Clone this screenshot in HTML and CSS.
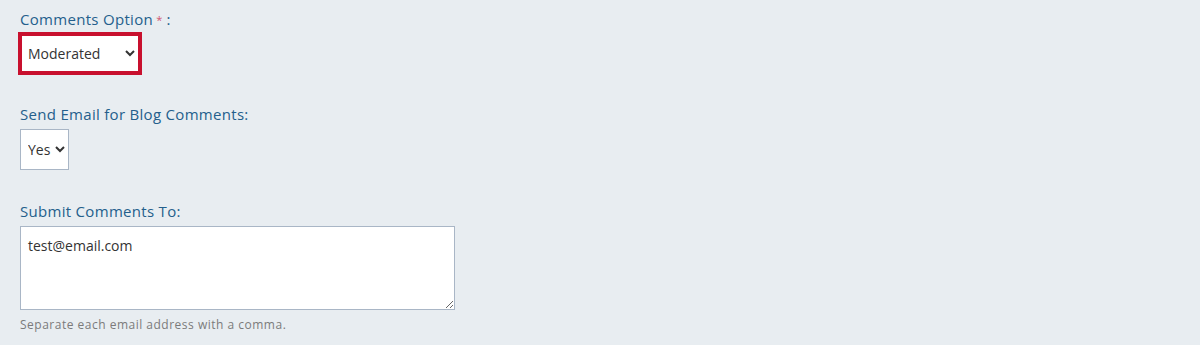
FILE: index.html
```html
<!DOCTYPE html>
<html lang="en">
<head>
<meta charset="utf-8">
<title>Blog Comments Settings</title>
<link rel="stylesheet" href="styles.css">
</head>
<body>
<form class="settings">
  <div class="field">
    <label class="label" for="opt">Comments Option <span class="req">*</span> :</label>
    <select id="opt" class="select select-focus">
      <option>Moderated</option>
      <option>Unmoderated</option>
      <option>Disabled</option>
    </select>
  </div>
  <div class="field">
    <label class="label" for="send">Send Email for Blog Comments:</label>
    <select id="send" class="select">
      <option>Yes</option>
      <option>No</option>
    </select>
  </div>
  <div class="field field-last">
    <label class="label" for="to">Submit Comments To:</label>
    <textarea id="to" class="textarea">test@email.com</textarea>
    <div class="help">Separate each email address with a comma.</div>
  </div>
</form>
</body>
</html>
```

FILE: styles.css
```css
html, body {
  margin: 0;
  padding: 0;
  background: #e8edf1;
}
body {
  font-family: "Open Sans", "Noto Sans", sans-serif;
  color: #333;
}
.settings {
  display: flex;
  flex-direction: column;
  align-items: flex-start;
  padding: 9px 20px 0 20px;
  gap: 30px;
}
.field {
  display: flex;
  flex-direction: column;
  align-items: flex-start;
}
.field-last {
  margin-top: 1px;
}
.label {
  font-size: 15px;
  line-height: 20px;
  letter-spacing: 0.3px;
  color: #245f8c;
  margin-bottom: 5px;
}
.req {
  color: #d0566f;
  font-size: 11px;
  line-height: 0;
  letter-spacing: 0;
  position: relative;
  top: -1px;
  margin-left: -1px;
}
.select {
  box-sizing: border-box;
  height: 41px;
  font-family: inherit;
  font-size: 14px;
  color: #333;
  background: #fff;
  border: 1px solid #a9b6c6;
  border-radius: 0;
  padding: 0 1px 0 3px;
  outline: none;
}
.select-focus {
  width: 124px;
  height: 43px;
  border: 4px solid #c8102e;
  padding-left: 2px;
  margin: -2px 0 -1px -2px;
}
.textarea {
  box-sizing: border-box;
  width: 435px;
  height: 84px;
  border: 1px solid #a9b6c6;
  border-radius: 0;
  background: #fff;
  padding: 9px 7px;
  font-family: inherit;
  font-size: 14px;
  line-height: 20px;
  color: #333;
  margin: 0;
}
.help {
  margin-top: 7px;
  font-size: 12px;
  line-height: 16px;
  letter-spacing: 0.5px;
  color: #7b7b7b;
}
```
